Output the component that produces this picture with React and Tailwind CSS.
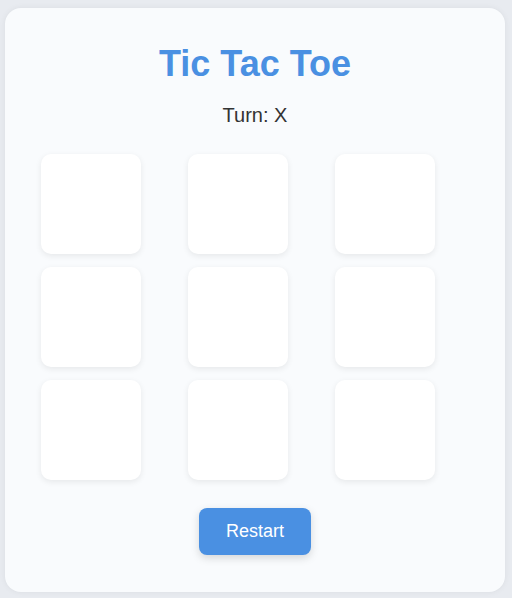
import React, { useState } from 'react';

const App = () => {
  const [board, setBoard] = useState(Array(9).fill(null));
  const [turn, setTurn] = useState('X');

  const play = (i) => {
    if (board[i]) return;
    const next = [...board];
    next[i] = turn;
    setBoard(next);
    setTurn(turn === 'X' ? 'O' : 'X');
  };

  const restart = () => {
    setBoard(Array(9).fill(null));
    setTurn('X');
  };

  return (
    <div className="min-h-[598px] bg-[#e8ebf0] pt-[8px] pl-[5px] pr-[7px] pb-[7px] font-['Liberation_Sans',Arial,sans-serif]">
      <div className="bg-[#f9fbfd] rounded-[16px] shadow-[0_0_6px_rgba(0,0,0,0.06)] pt-[36px] pb-[37px] flex flex-col items-center">
        <h1 className="text-[36px] leading-[40px] font-bold text-[#4a90e2]">Tic Tac Toe</h1>
        <p className="mt-[19px] text-[20px] leading-[24px] text-[#333]">Turn: {turn}</p>

        <div className="mt-[27px] self-start ml-[36px] grid grid-cols-[repeat(3,137px)] gap-x-[10px] gap-y-[13px]">
          {board.map((v, i) => (
            <button
              key={i}
              type="button"
              onClick={() => play(i)}
              className="w-[100px] h-[100px] bg-white rounded-[10px] shadow-[0_2px_6px_rgba(0,0,0,0.08)] text-[48px] font-bold text-[#4a90e2] flex items-center justify-center"
            >
              {v}
            </button>
          ))}
        </div>

        <button
          type="button"
          onClick={restart}
          className="mt-[28px] w-[112px] h-[47px] rounded-[8px] bg-[#4a90e2] text-white text-[18px] shadow-[0_3px_8px_rgba(0,0,0,0.15)]"
        >
          Restart
        </button>
      </div>
    </div>
  );
};

export default App;
